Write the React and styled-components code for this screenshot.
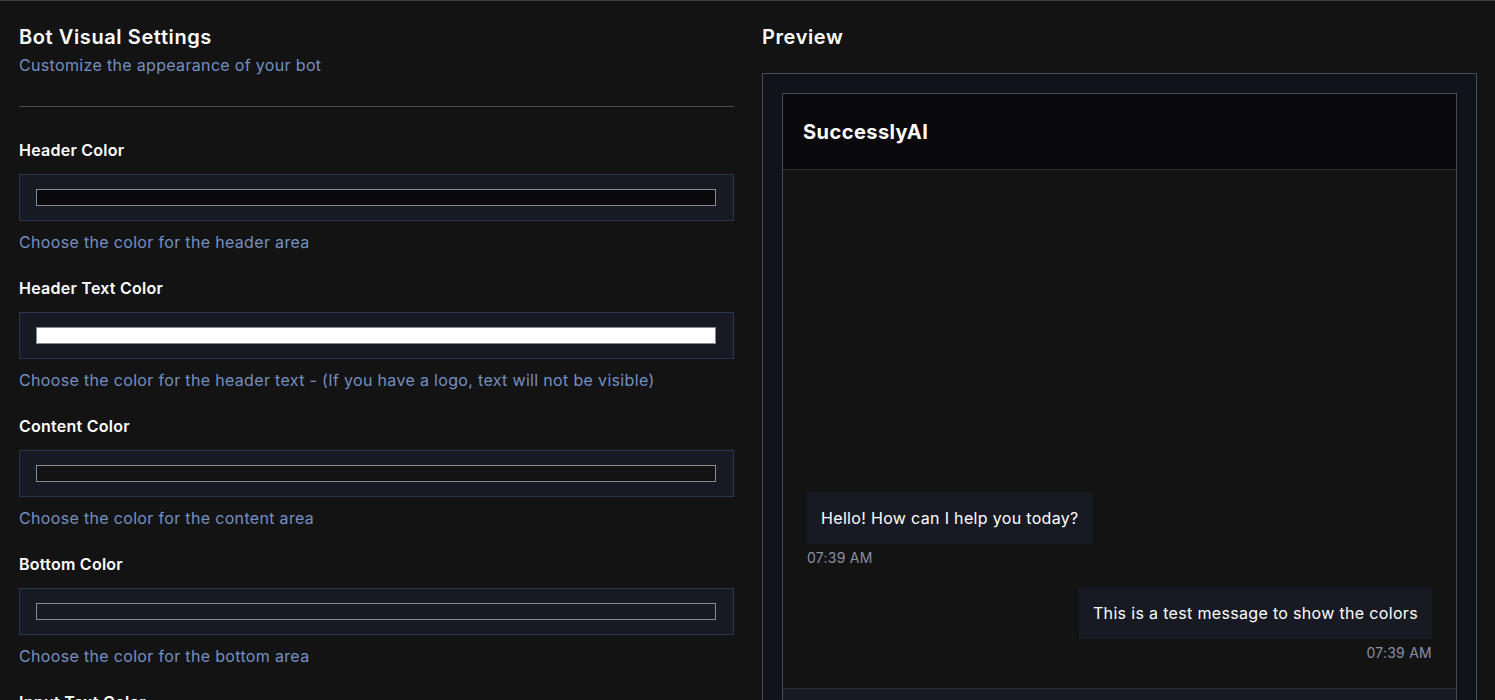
import React from "react";
import styled, { createGlobalStyle } from "styled-components";

const GlobalStyle = createGlobalStyle`
  html, body {
    margin: 0;
    padding: 0;
    background: #131313;
    overflow: hidden;
  }
  body {
    font-family: Inter, "Noto Sans", "Liberation Sans", sans-serif;
    color: #ffffff;
    border-top: 1px solid #3b3b40;
  }
`;

const Page = styled.div`
  display: grid;
  grid-template-columns: 715px 715px;
  column-gap: 28px;
  padding: 22px 18px 0 19px;
  height: 699px;
  box-sizing: border-box;
`;

const Column = styled.section`
  display: flex;
  flex-direction: column;
  min-width: 0;
`;

const Title = styled.h2`
  margin: 0;
  font-size: 20px;
  line-height: 28px;
  font-weight: 600;
  letter-spacing: 0.6px;
  color: #ffffff;
`;

const Subtitle = styled.p`
  margin: 2px 0 0;
  font-size: 16px;
  line-height: 24px;
  letter-spacing: 0.33px;
  color: #7390c2;
`;

const Divider = styled.hr`
  margin: 29px 0 31px;
  border: 0;
  border-top: 1px solid #4a4a50;
`;

const Field = styled.div`
  display: flex;
  flex-direction: column;
  margin-bottom: 22px;
`;

const Label = styled.label`
  font-size: 16px;
  line-height: 24px;
  font-weight: 600;
  letter-spacing: 0.25px;
  color: #ffffff;
`;

const SwatchBox = styled.div`
  margin-top: 12px;
  padding: 14px 17px 14px 16px;
  background: #171a22;
  border: 1px solid #2a3650;
`;

const Swatch = styled.div`
  height: 15px;
  border: 1px solid #8a8a8e;
  background: ${(p) => p.$color};
`;

const Hint = styled.p`
  margin: 9px 0 0;
  font-size: 16px;
  line-height: 24px;
  letter-spacing: 0.33px;
  color: #7390c2;
`;

const PreviewFrame = styled.div`
  margin-top: 22px;
  flex: 1;
  padding: 19px 19px 0;
  background: #10131a;
  border: 1px solid #4a4a50;
  border-bottom: 0;
  display: flex;
`;

const Widget = styled.div`
  flex: 1;
  display: flex;
  flex-direction: column;
  border: 1px solid #4a4a50;
  border-bottom: 0;
`;

const WidgetHeader = styled.div`
  height: 75px;
  padding: 0 20px;
  display: flex;
  align-items: center;
  background: #0a0a0c;
  border-bottom: 1px solid #2e2e33;
  font-size: 20px;
  font-weight: 700;
  letter-spacing: 0.45px;
  color: #ffffff;
`;

const Messages = styled.div`
  height: 518px;
  box-sizing: border-box;
  padding: 24px 24px 25px;
  background: #131313;
  display: flex;
  flex-direction: column;
  justify-content: flex-end;
`;

const Message = styled.div`
  display: flex;
  flex-direction: column;
  align-items: ${(p) => (p.$mine ? "flex-end" : "flex-start")};
  & + & {
    margin-top: 19px;
  }
`;

const Bubble = styled.div`
  padding: 14px;
  background: #171a22;
  font-size: 16px;
  line-height: 24px;
  letter-spacing: 0.33px;
  color: #ffffff;
`;

const Time = styled.span`
  margin-top: 4px;
  font-size: 14px;
  line-height: 20px;
  letter-spacing: 0.25px;
  color: #8a90a0;
`;

const InputBar = styled.div`
  flex: 1;
  background: #171a22;
  border-top: 1px solid #2e2e33;
`;

const fields = [
  { label: "Header Color", color: "#0a0a0c", hint: "Choose the color for the header area" },
  {
    label: "Header Text Color",
    color: "#ffffff",
    hint: "Choose the color for the header text - (If you have a logo, text will not be visible)",
  },
  { label: "Content Color", color: "#131313", hint: "Choose the color for the content area" },
  { label: "Bottom Color", color: "#171a22", hint: "Choose the color for the bottom area" },
  { label: "Input Text Color", color: "#ffffff", hint: "Choose the color for the input text" },
];

const messages = [
  { text: "Hello! How can I help you today?", time: "07:39 AM", mine: false },
  { text: "This is a test message to show the colors", time: "07:39 AM", mine: true },
];

export default function App() {
  return (
    <>
      <GlobalStyle />
      <Page>
        <Column>
          <Title>Bot Visual Settings</Title>
          <Subtitle>Customize the appearance of your bot</Subtitle>
          <Divider />
          {fields.map((f) => (
            <Field key={f.label}>
              <Label>{f.label}</Label>
              <SwatchBox>
                <Swatch $color={f.color} />
              </SwatchBox>
              <Hint>{f.hint}</Hint>
            </Field>
          ))}
        </Column>
        <Column>
          <Title>Preview</Title>
          <PreviewFrame>
            <Widget>
              <WidgetHeader>SuccesslyAI</WidgetHeader>
              <Messages>
                {messages.map((m, i) => (
                  <Message key={i} $mine={m.mine}>
                    <Bubble>{m.text}</Bubble>
                    <Time>{m.time}</Time>
                  </Message>
                ))}
              </Messages>
              <InputBar />
            </Widget>
          </PreviewFrame>
        </Column>
      </Page>
    </>
  );
}
